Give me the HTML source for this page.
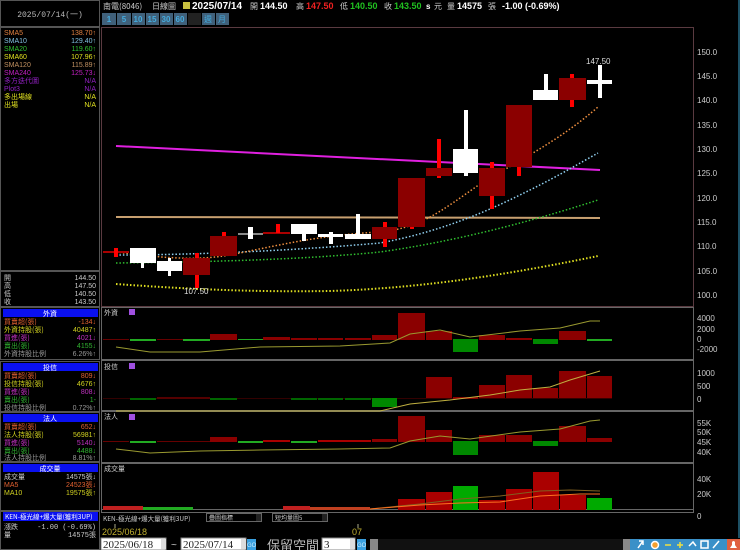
<!DOCTYPE html>
<html><head><meta charset="utf-8"><style>
html,body{margin:0;padding:0;background:#000;width:740px;height:550px;overflow:hidden}
svg{display:block}
text{font-family:"Liberation Sans","WenQuanYi Zen Hei","Noto Sans CJK TC",sans-serif;font-size:8px}
.c{font-family:"WenQuanYi Zen Hei","Noto Sans CJK TC",sans-serif;font-size:7px}
.m{font-family:"Liberation Mono","WenQuanYi Zen Hei",monospace;font-size:8px}
.s text{font-size:7px}
</style></head><body>
<svg width="740" height="550" viewBox="0 0 740 550" xmlns="http://www.w3.org/2000/svg">
<rect width="740" height="550" fill="#000"/>
<rect x="0.5" y="0.5" width="99" height="26" fill="none" stroke="#555"/>
<text x="50" y="17" fill="#bbb" text-anchor="middle" class="m">2025/07/14(一)</text>
<rect x="0.5" y="27.5" width="99" height="243" fill="none" stroke="#555"/>
<g class="m s">
<text x="4" y="35" fill="#e08040">SMA5</text><text x="96" y="35" fill="#e08040" text-anchor="end">138.70↑</text>
<text x="4" y="43" fill="#80c0e0">SMA10</text><text x="96" y="43" fill="#80c0e0" text-anchor="end">129.40↑</text>
<text x="4" y="51" fill="#30c030">SMA20</text><text x="96" y="51" fill="#30c030" text-anchor="end">119.60↑</text>
<text x="4" y="59" fill="#e0e020">SMA60</text><text x="96" y="59" fill="#e0e020" text-anchor="end">107.96↑</text>
<text x="4" y="67" fill="#c09060">SMA120</text><text x="96" y="67" fill="#c09060" text-anchor="end">115.89↑</text>
<text x="4" y="75" fill="#c020c0">SMA240</text><text x="96" y="75" fill="#c020c0" text-anchor="end">125.73↓</text>
<text x="4" y="83" fill="#9020c0" class="c">多方迭代圖</text><text x="96" y="83" fill="#9020c0" text-anchor="end">N/A</text>
<text x="4" y="91" fill="#9020c0">Plot3</text><text x="96" y="91" fill="#9020c0" text-anchor="end">N/A</text>
<text x="4" y="99" fill="#e0e020" class="c">多出場線</text><text x="96" y="99" fill="#e0e020" text-anchor="end">N/A</text>
<text x="4" y="107" fill="#e0e020" class="c">出場</text><text x="96" y="107" fill="#e0e020" text-anchor="end">N/A</text>
</g>
<rect x="0.5" y="271.5" width="99" height="35" fill="none" stroke="#555"/>
<g class="m s" fill="#ccc">
<text x="4" y="280" class="c">開</text><text x="96" y="280" text-anchor="end">144.50</text>
<text x="4" y="288" class="c">高</text><text x="96" y="288" text-anchor="end">147.50</text>
<text x="4" y="296" class="c">低</text><text x="96" y="296" text-anchor="end">140.50</text>
<text x="4" y="304" class="c">收</text><text x="96" y="304" text-anchor="end">143.50</text>
</g>
<rect x="0.5" y="307.5" width="99" height="52" fill="none" stroke="#555"/>
<rect x="3" y="309" width="95" height="8" fill="#0a10f0"/>
<text x="50" y="316" fill="#fff" text-anchor="middle" class="c">外資</text>
<g class="m s">
<text x="4" y="324" fill="#e06030" class="c">買賣超(張)</text><text x="96" y="324" fill="#e06030" text-anchor="end">-134↓</text>
<text x="4" y="332" fill="#d0d020" class="c">外資持股(張)</text><text x="96" y="332" fill="#d0d020" text-anchor="end">40487↑</text>
<text x="4" y="340" fill="#c030c0" class="c">買進(張)</text><text x="96" y="340" fill="#c030c0" text-anchor="end">4021↓</text>
<text x="4" y="348" fill="#30b030" class="c">賣出(張)</text><text x="96" y="348" fill="#30b030" text-anchor="end">4155↓</text>
<text x="4" y="356" fill="#999" class="c">外資持股比例</text><text x="96" y="356" fill="#999" text-anchor="end">6.26%↑</text>
</g>
<rect x="0.5" y="361.5" width="99" height="50" fill="none" stroke="#555"/>
<rect x="3" y="363" width="95" height="8" fill="#0a10f0"/>
<text x="50" y="370" fill="#fff" text-anchor="middle" class="c">投信</text>
<g class="m s">
<text x="4" y="378" fill="#e06030" class="c">買賣超(張)</text><text x="96" y="378" fill="#e06030" text-anchor="end">809↓</text>
<text x="4" y="386" fill="#d0d020" class="c">投信持股(張)</text><text x="96" y="386" fill="#d0d020" text-anchor="end">4676↑</text>
<text x="4" y="394" fill="#c030c0" class="c">買進(張)</text><text x="96" y="394" fill="#c030c0" text-anchor="end">808↓</text>
<text x="4" y="402" fill="#30b030" class="c">賣出(張)</text><text x="96" y="402" fill="#30b030" text-anchor="end">1-</text>
<text x="4" y="410" fill="#999" class="c">投信持股比例</text><text x="96" y="410" fill="#999" text-anchor="end">0.72%↑</text>
</g>
<rect x="0.5" y="412.5" width="99" height="49" fill="none" stroke="#555"/>
<rect x="3" y="414" width="95" height="8" fill="#0a10f0"/>
<text x="50" y="421" fill="#fff" text-anchor="middle" class="c">法人</text>
<g class="m s">
<text x="4" y="429" fill="#e06030" class="c">買賣超(張)</text><text x="96" y="429" fill="#e06030" text-anchor="end">652↓</text>
<text x="4" y="437" fill="#d0d020" class="c">法人持股(張)</text><text x="96" y="437" fill="#d0d020" text-anchor="end">56981↑</text>
<text x="4" y="445" fill="#c030c0" class="c">買進(張)</text><text x="96" y="445" fill="#c030c0" text-anchor="end">5140↓</text>
<text x="4" y="453" fill="#30b030" class="c">賣出(張)</text><text x="96" y="453" fill="#30b030" text-anchor="end">4488↓</text>
<text x="4" y="460" fill="#999" class="c">法人持股比例</text><text x="96" y="460" fill="#999" text-anchor="end">8.81%↑</text>
</g>
<rect x="0.5" y="462.5" width="99" height="48" fill="none" stroke="#555"/>
<rect x="3" y="464" width="95" height="8" fill="#0a10f0"/>
<text x="50" y="471" fill="#fff" text-anchor="middle" class="c">成交量</text>
<g class="m s">
<text x="4" y="479" fill="#ccc" class="c">成交量</text><text x="96" y="479" fill="#ccc" text-anchor="end">14575張↓</text>
<text x="4" y="487" fill="#e06030">MA5</text><text x="96" y="487" fill="#e06030" text-anchor="end">24523張↓</text>
<text x="4" y="495" fill="#d0d020">MA10</text><text x="96" y="495" fill="#d0d020" text-anchor="end">19575張↑</text>
</g>
<rect x="0.5" y="511.5" width="99" height="38" fill="none" stroke="#555"/>
<rect x="3" y="512" width="95" height="9" fill="#0a10f0"/>
<text x="5" y="519" fill="#fff" class="c" style="font-size:6.5px">KEN-極光線+爆大量(獲利3UP)</text>
<text x="4" y="529" fill="#ccc" class="c">漲跌</text><text x="96" y="529" fill="#ccc" text-anchor="end" class="m" style="font-size:7px">-1.00 (-0.69%)</text>
<text x="4" y="537" fill="#ccc" class="c">量</text><text x="96" y="537" fill="#ccc" text-anchor="end" class="m" style="font-size:7px">14575張</text>

<text x="103" y="9" fill="#ccc" class="c" style="font-size:8px">南電(8046)</text>
<text x="152" y="9" fill="#ccc" class="c" style="font-size:8px">日線圖</text>
<rect x="183" y="2" width="7" height="7" fill="#c8c040"/>
<text x="192" y="9" fill="#fff" font-weight="bold" style="font-size:10px">2025/07/14</text>
<text x="250" y="9" fill="#ccc" class="c" style="font-size:8px">開</text><text x="260" y="9" fill="#fff" font-weight="bold" style="font-size:9px">144.50</text>
<text x="296" y="9" fill="#ccc" class="c" style="font-size:8px">高</text><text x="306" y="9" fill="#f02020" font-weight="bold" style="font-size:9px">147.50</text>
<text x="340" y="9" fill="#ccc" class="c" style="font-size:8px">低</text><text x="350" y="9" fill="#20c020" font-weight="bold" style="font-size:9px">140.50</text>
<text x="384" y="9" fill="#ccc" class="c" style="font-size:8px">收</text><text x="394" y="9" fill="#20c020" font-weight="bold" style="font-size:9px">143.50</text>
<text x="426" y="9" fill="#fff" font-weight="bold">s</text><text x="434" y="9" fill="#ccc" class="c" style="font-size:8px">元</text>
<text x="447" y="9" fill="#ccc" class="c" style="font-size:8px">量</text><text x="457" y="9" fill="#fff" font-weight="bold" style="font-size:9px">14575</text>
<text x="488" y="9" fill="#ccc" class="c" style="font-size:8px">張</text><text x="502" y="9" fill="#fff" font-weight="bold" style="font-size:9px">-1.00 (-0.69%)</text>
<g>
<rect x="102" y="13" width="14" height="12" fill="#40607a"/><text x="109" y="22" fill="#4ad" text-anchor="middle" font-weight="bold">1</text>
<rect x="117" y="13" width="14" height="12" fill="#40607a"/><text x="124" y="22" fill="#4ad" text-anchor="middle" font-weight="bold">5</text>
<rect x="132" y="13" width="13" height="12" fill="#40607a"/><text x="138" y="22" fill="#4ad" text-anchor="middle" font-weight="bold">10</text>
<rect x="146" y="13" width="13" height="12" fill="#40607a"/><text x="152" y="22" fill="#4ad" text-anchor="middle" font-weight="bold">15</text>
<rect x="160" y="13" width="13" height="12" fill="#40607a"/><text x="166" y="22" fill="#4ad" text-anchor="middle" font-weight="bold">30</text>
<rect x="174" y="13" width="13" height="12" fill="#40607a"/><text x="180" y="22" fill="#4ad" text-anchor="middle" font-weight="bold">60</text>
<rect x="188" y="13" width="13" height="12" fill="#222"/>
<rect x="202" y="13" width="13" height="12" fill="#40607a"/><text x="208" y="22" fill="#4ad" text-anchor="middle" class="c" style="font-size:8px">週</text>
<rect x="216" y="13" width="13" height="12" fill="#40607a"/><text x="222" y="22" fill="#4ad" text-anchor="middle" class="c" style="font-size:8px">月</text>
</g>

<rect x="101.5" y="27.5" width="592" height="279" fill="none" stroke="#5a3a40"/>
<g fill="#ccc">
<text x="697" y="55">150.0</text><text x="697" y="79">145.0</text><text x="697" y="103">140.0</text>
<text x="697" y="128">135.0</text><text x="697" y="152">130.0</text><text x="697" y="176">125.0</text>
<text x="697" y="201">120.0</text><text x="697" y="225">115.0</text><text x="697" y="249">110.0</text>
<text x="697" y="274">105.0</text><text x="697" y="298">100.0</text>
</g>
<line x1="116" y1="146" x2="600" y2="170" stroke="#e020e0" stroke-width="2"/>
<line x1="116" y1="217" x2="600" y2="218" stroke="#c8a070" stroke-width="2"/>
<path d="M116,284 C200,290 260,292 330,291 C430,288 520,272 598,256" fill="none" stroke="#e0e020" stroke-width="2" stroke-dasharray="1.5 2"/>
<path d="M116,263 C200,262 300,260 380,252 C450,242 520,225 598,200" fill="none" stroke="#30c030" stroke-width="1.5" stroke-dasharray="1.5 2"/>
<path d="M116,255 C200,255 300,250 380,243 C450,230 500,205 530,190 C560,175 580,163 598,153" fill="none" stroke="#90d0f0" stroke-width="1.5" stroke-dasharray="1.5 2"/>
<path d="M116,252 C150,256 190,262 230,255 C280,245 320,235 380,232 C420,228 440,212 480,184 C520,160 560,140 598,107" fill="none" stroke="#f09040" stroke-width="1.5" stroke-dasharray="1.5 2"/>
<g>
<rect x="103" y="251" width="26" height="2" fill="#a00"/><rect x="114" y="248" width="4" height="9" fill="#f00"/>
<rect x="130" y="248" width="26" height="15" fill="#fff"/><rect x="141" y="263" width="3" height="5" fill="#fff"/>
<rect x="157" y="261" width="25" height="10" fill="#fff"/><rect x="168" y="258" width="3" height="18" fill="#fff"/>
<rect x="195" y="253" width="4" height="35" fill="#f00"/><rect x="183" y="258" width="27" height="17" fill="#8b0000"/>
<rect x="210" y="236" width="27" height="20" fill="#8b0000"/><rect x="222" y="232" width="4" height="4" fill="#f00"/>
<rect x="238" y="233" width="25" height="2" fill="#888"/><rect x="248" y="227" width="5" height="12" fill="#fff"/>
<rect x="263" y="232" width="27" height="2" fill="#a00"/><rect x="276" y="224" width="4" height="9" fill="#f00"/>
<rect x="291" y="224" width="26" height="10" fill="#fff"/><rect x="302" y="234" width="4" height="7" fill="#fff"/>
<rect x="318" y="234" width="25" height="3" fill="#fff"/><rect x="329" y="232" width="4" height="12" fill="#fff"/>
<rect x="345" y="234" width="26" height="5" fill="#fff"/><rect x="356" y="214" width="4" height="20" fill="#fff"/>
<rect x="383" y="222" width="4" height="25" fill="#f00"/><rect x="372" y="227" width="25" height="12" fill="#8b0000"/>
<rect x="398" y="178" width="27" height="49" fill="#8b0000"/><rect x="410" y="227" width="4" height="2" fill="#f00"/>
<rect x="437" y="139" width="4" height="39" fill="#f00"/><rect x="426" y="168" width="26" height="8" fill="#8b0000"/>
<rect x="464" y="110" width="4" height="66" fill="#fff"/><rect x="453" y="149" width="25" height="24" fill="#fff"/>
<rect x="490" y="162" width="4" height="47" fill="#f00"/><rect x="479" y="168" width="26" height="28" fill="#8b0000"/>
<rect x="506" y="105" width="26" height="62" fill="#8b0000"/><rect x="517" y="167" width="4" height="9" fill="#f00"/>
<rect x="533" y="90" width="25" height="10" fill="#fff"/><rect x="544" y="74" width="4" height="16" fill="#fff"/>
<rect x="570" y="74" width="4" height="33" fill="#f00"/><rect x="559" y="78" width="27" height="22" fill="#8b0000"/>
<rect x="587" y="80" width="25" height="4" fill="#fff"/><rect x="598" y="65" width="4" height="33" fill="#fff"/>
</g>
<text x="586" y="64" fill="#ddd">147.50</text>
<text x="184" y="294" fill="#ddd">107.50</text>

<g fill="none" stroke="#666">
<rect x="101.5" y="307.5" width="592" height="52"/>
<rect x="101.5" y="360.5" width="592" height="50"/>
<rect x="101.5" y="411.5" width="592" height="51"/>
<rect x="101.5" y="463.5" width="592" height="46"/>
<rect x="101.5" y="509.5" width="592" height="3"/>
</g>
<g class="c" fill="#ccc">
<text x="104" y="315" class="c">外資</text><text x="104" y="369" class="c">投信</text><text x="104" y="419" class="c">法人</text><text x="104" y="471" class="c">成交量</text>
</g>
<rect x="129" y="309" width="6" height="6" fill="#a050e0"/><rect x="129" y="363" width="6" height="6" fill="#a050e0"/><rect x="129" y="414" width="6" height="6" fill="#a050e0"/>
<g fill="#ccc">
<text x="697" y="321">4000</text><text x="697" y="332">2000</text><text x="697" y="342">0</text><text x="697" y="352">-2000</text>
<text x="697" y="376">1000</text><text x="697" y="389">500</text><text x="697" y="402">0</text>
<text x="697" y="426">55K</text><text x="697" y="435">50K</text><text x="697" y="445">45K</text><text x="697" y="455">40K</text>
<text x="697" y="482">40K</text><text x="697" y="497">20K</text><text x="697" y="519">0</text>
</g>
<g>
<rect x="103" y="339" width="26" height="1" fill="#600"/><rect x="130" y="339" width="26" height="2" fill="#2a2"/>
<rect x="157" y="339" width="26" height="1" fill="#600"/><rect x="183" y="339" width="27" height="2" fill="#2a2"/>
<rect x="210" y="334" width="27" height="6" fill="#8b0000"/><rect x="238" y="339" width="25" height="1" fill="#2a2"/>
<rect x="263" y="337" width="27" height="3" fill="#8b0000"/><rect x="291" y="338" width="26" height="2" fill="#8b0000"/>
<rect x="318" y="338" width="25" height="2" fill="#8b0000"/><rect x="345" y="338" width="26" height="2" fill="#8b0000"/>
<rect x="372" y="335" width="25" height="5" fill="#8b0000"/><rect x="398" y="313" width="27" height="27" fill="#8b0000"/>
<rect x="426" y="331" width="26" height="9" fill="#8b0000"/><rect x="453" y="339" width="25" height="13" fill="#080"/>
<rect x="479" y="335" width="26" height="5" fill="#8b0000"/><rect x="506" y="338" width="26" height="2" fill="#8b0000"/>
<rect x="533" y="339" width="25" height="5" fill="#080"/><rect x="559" y="331" width="27" height="9" fill="#8b0000"/>
<rect x="587" y="339" width="25" height="2" fill="#2a2"/>
<path d="M116,347 L150,352 L200,352 L260,347 L340,346 L390,343 L410,334 L440,330 L470,337 L520,331 L560,328 L590,321 L600,321" fill="none" stroke="#9a9a30" stroke-width="1"/>
</g>
<g>
<rect x="103" y="398" width="509" height="1" fill="#300"/>
<rect x="130" y="398" width="26" height="2" fill="#060"/><rect x="157" y="397" width="26" height="2" fill="#500"/>
<rect x="183" y="397" width="27" height="2" fill="#500"/><rect x="210" y="398" width="27" height="2" fill="#060"/>
<rect x="291" y="398" width="26" height="2" fill="#060"/><rect x="318" y="398" width="25" height="2" fill="#060"/>
<rect x="345" y="398" width="26" height="2" fill="#060"/><rect x="372" y="398" width="25" height="9" fill="#080"/>
<rect x="426" y="377" width="26" height="21" fill="#8b0000"/><rect x="453" y="397" width="25" height="2" fill="#8b0000"/>
<rect x="479" y="385" width="26" height="13" fill="#8b0000"/><rect x="506" y="375" width="26" height="23" fill="#8b0000"/>
<rect x="533" y="388" width="25" height="10" fill="#8b0000"/><rect x="559" y="371" width="27" height="27" fill="#8b0000"/>
<rect x="587" y="376" width="25" height="22" fill="#8b0000"/>
<path d="M116,411 L380,411 L410,404 L450,400 L490,395 L520,390 L550,387 L570,380 L600,371" fill="none" stroke="#c0b040" stroke-width="1"/>
</g>
<g>
<rect x="103" y="441" width="26" height="1" fill="#600"/><rect x="130" y="441" width="26" height="2" fill="#2a2"/>
<rect x="157" y="441" width="53" height="1" fill="#600"/><rect x="210" y="437" width="27" height="5" fill="#8b0000"/>
<rect x="238" y="441" width="25" height="2" fill="#2a2"/><rect x="263" y="440" width="27" height="2" fill="#a00"/>
<rect x="291" y="441" width="26" height="2" fill="#2a2"/><rect x="318" y="440" width="53" height="2" fill="#a00"/>
<rect x="372" y="439" width="25" height="3" fill="#8b0000"/><rect x="398" y="416" width="27" height="26" fill="#8b0000"/>
<rect x="426" y="430" width="26" height="12" fill="#8b0000"/><rect x="453" y="441" width="25" height="14" fill="#080"/>
<rect x="479" y="435" width="26" height="7" fill="#8b0000"/><rect x="506" y="435" width="26" height="7" fill="#8b0000"/>
<rect x="533" y="441" width="25" height="5" fill="#080"/><rect x="559" y="426" width="27" height="16" fill="#8b0000"/>
<rect x="587" y="438" width="25" height="4" fill="#8b0000"/>
<path d="M116,449 L150,453 L200,451 L260,450 L340,449 L390,448 L410,441 L440,436 L470,439 L520,432 L560,429 L590,421 L600,420" fill="none" stroke="#9a9a30" stroke-width="1"/>
</g>
<g>
<rect x="103" y="506" width="40" height="4" fill="#c02020"/><rect x="143" y="507" width="50" height="3" fill="#2a2"/>
<rect x="283" y="506" width="27" height="4" fill="#c02020"/><rect x="310" y="507" width="60" height="3" fill="#c04020"/>
<rect x="398" y="499" width="27" height="11" fill="#a00"/><rect x="426" y="492" width="26" height="18" fill="#a00"/>
<rect x="453" y="486" width="25" height="24" fill="#0a0"/><rect x="479" y="500" width="26" height="10" fill="#a00"/>
<rect x="506" y="489" width="26" height="21" fill="#a00"/><rect x="533" y="472" width="26" height="38" fill="#a00"/>
<rect x="560" y="495" width="26" height="15" fill="#a00"/><rect x="587" y="498" width="25" height="12" fill="#0a0"/>
<path d="M370,509 L420,504 L460,499 L500,496 L540,491 L570,490 L600,491" fill="none" stroke="#806020" stroke-width="1"/>
<path d="M370,509 L420,505 L460,503 L500,502 L540,496 L580,494 L600,494" fill="none" stroke="#ff7020" stroke-width="1"/>
</g>
<rect x="101" y="513" width="592" height="10" fill="#000"/>
<text x="103" y="521" fill="#ccc" class="c" style="font-size:6.5px">KEN-極光線+爆大量(獲利3UP)</text>
<rect x="206.5" y="513.5" width="55" height="8" fill="#000" stroke="#666"/><text x="209" y="520" fill="#ccc" class="c" style="font-size:6px">疊圖指標</text>
<rect x="256" y="514" width="5" height="7" fill="#222"/>
<rect x="272.5" y="513.5" width="55" height="8" fill="#000" stroke="#666"/><text x="275" y="520" fill="#ccc" class="c" style="font-size:6px">短均量圖5</text>
<rect x="322" y="514" width="5" height="7" fill="#222"/>
<line x1="115" y1="524" x2="115" y2="528" stroke="#aa8"/><line x1="358" y1="524" x2="358" y2="528" stroke="#aa8"/>
<text x="102" y="535" fill="#c0b030" style="font-size:9px">2025/06/18</text>
<text x="352" y="535" fill="#c0b030" style="font-size:9px">07</text>
<rect x="101" y="538" width="65" height="12" fill="#fff" stroke="#888"/><text x="103" y="548" fill="#222" font-family="Liberation Serif" style="font-size:11px;font-family:'Liberation Serif',serif">2025/06/18</text>
<rect x="161" y="539" width="5" height="10" fill="#ddd"/>
<text x="171" y="548" fill="#ccc" style="font-size:10px">~</text>
<rect x="181" y="538" width="65" height="12" fill="#fff" stroke="#888"/><text x="183" y="548" fill="#222" style="font-size:11px;font-family:'Liberation Serif',serif">2025/07/14</text>
<rect x="241" y="539" width="5" height="10" fill="#ddd"/>
<rect x="247" y="539" width="9" height="11" fill="#3aa0e0"/><text x="247" y="547" fill="#cef" style="font-size:6px">GO</text>
<text x="267" y="550" fill="#bbb" class="c" style="font-size:13px">保留空間</text>
<rect x="322" y="538" width="33" height="12" fill="#fff" stroke="#888"/><text x="324" y="548" fill="#222" style="font-size:11px;font-family:'Liberation Serif',serif">3</text>
<rect x="350" y="539" width="5" height="10" fill="#ddd"/>
<rect x="357" y="539" width="9" height="11" fill="#3aa0e0"/><text x="357" y="547" fill="#cef" style="font-size:6px">GO</text>
<rect x="370" y="539" width="8" height="11" fill="#888"/>
<rect x="378" y="539" width="245" height="11" fill="#111"/>
<rect x="623" y="539" width="7" height="11" fill="#888"/>
<rect x="630" y="539" width="110" height="11" fill="#3a90c8"/>
<g stroke="#fff" stroke-width="1.5" fill="none">
<path d="M638,548 L643,541 M639,541 L643,541 L643,545"/>
<circle cx="655" cy="545" r="3.5" fill="#f5a030" stroke="#fff"/>
<path d="M665,545 L671,545" stroke="#f0e040"/>
<path d="M677,545 L683,545 M680,542 L680,548" stroke="#f0e040"/>
<path d="M689,546 L693,542 L696,546"/>
<rect x="701" y="541" width="7" height="7"/>
<path d="M713,548 L719,541"/>
</g>
<rect x="727" y="539" width="13" height="11" fill="#e06040"/><path d="M730,548 L737,548 L735,545 L735,542 Q733.5,540 732,542 L732,545 Z" fill="#fff"/>
<line x1="739" y1="0" x2="739" y2="538" stroke="#3aa0c8" stroke-width="1"/>
</svg>
</body></html>
